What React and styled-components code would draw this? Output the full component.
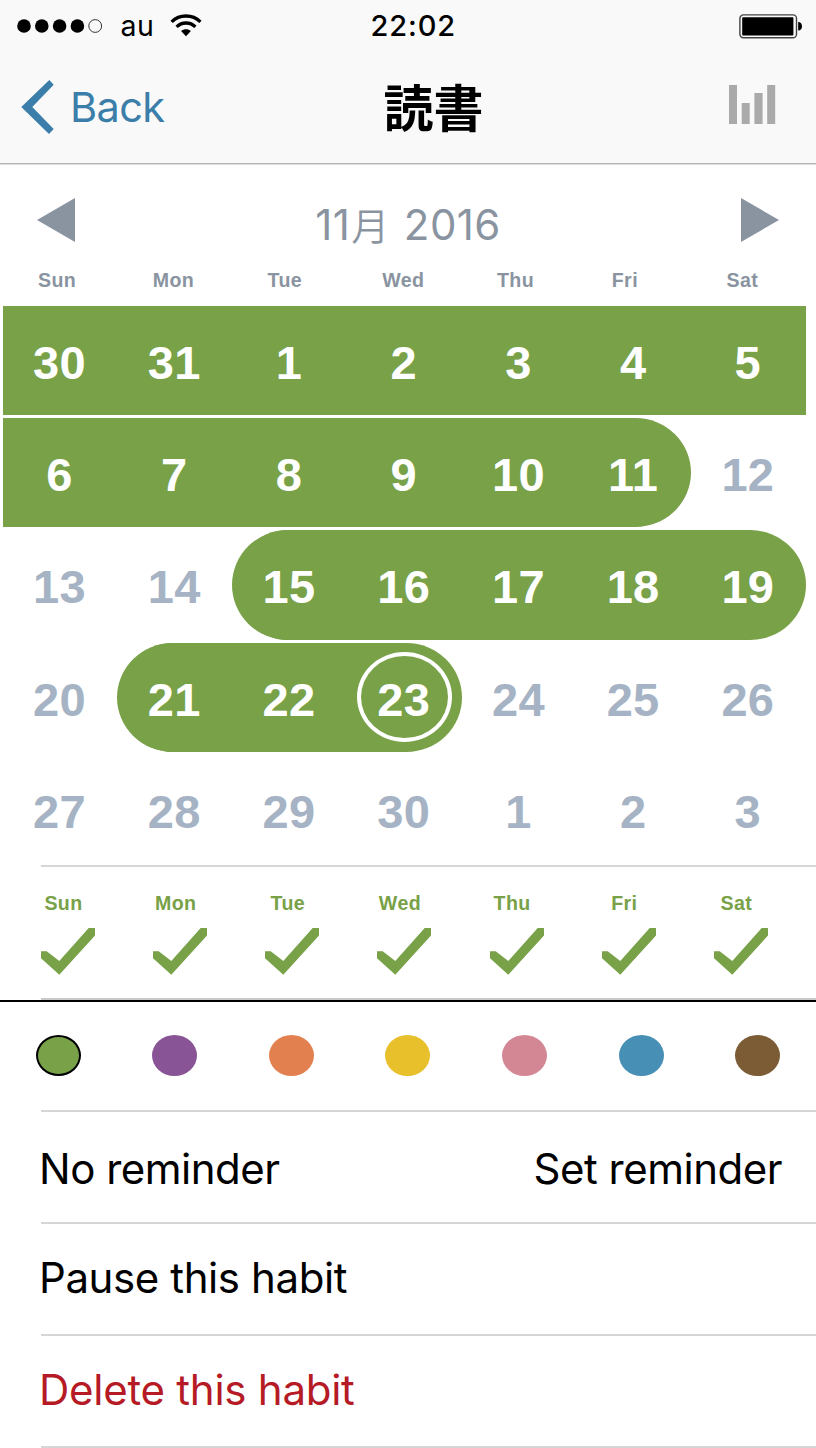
import React from 'react';
import styled, { createGlobalStyle } from 'styled-components';

const GREEN = '#78a148';
const SLATE = '#8a94a1';

const DAYS = ['Sun', 'Mon', 'Tue', 'Wed', 'Thu', 'Fri', 'Sat'];

// done: first and last column of the streak in that week
// start / end: whether the streak is rounded off on that side
const WEEKS = [
    { days: [30, 31, 1, 2, 3, 4, 5], done: [0, 6] },
    { days: [6, 7, 8, 9, 10, 11, 12], done: [0, 5], end: true },
    { days: [13, 14, 15, 16, 17, 18, 19], done: [2, 6], start: true, end: true },
    { days: [20, 21, 22, 23, 24, 25, 26], done: [1, 3], start: true, end: true, today: 3 },
    { days: [27, 28, 29, 30, 1, 2, 3] },
];

const COLORS = ['#78a148', '#885496', '#e2814f', '#e7c02c', '#d38795', '#478fb5', '#7b5c34'];

export default () => {
    return (
        <Screen>
            <GlobalStyle />
            <Header>
                <StatusBar />
                <NavBar>
                    <Back>
                        <BackIcon />
                        <BackText>Back</BackText>
                    </Back>
                    <Title>読書</Title>
                    <ChartIcon />
                </NavBar>
            </Header>
            <MonthBar>
                <Arrow viewBox="0 0 38 44">
                    <path d="M0 22L38 0V44Z" />
                </Arrow>
                <Month>
                    11<Kanji>月</Kanji> 2016
                </Month>
                <Arrow viewBox="0 0 38 44">
                    <path d="M38 22L0 0V44Z" />
                </Arrow>
            </MonthBar>
            <WeekHeader>
                {DAYS.map((day) => (
                    <WeekName key={day}>{day}</WeekName>
                ))}
            </WeekHeader>
            <Calendar>
                {WEEKS.map((week, i) => (
                    <Week key={i} {...week} />
                ))}
            </Calendar>
            <Schedule>
                {DAYS.map((day) => (
                    <ScheduleDay key={day}>
                        <ScheduleName>{day}</ScheduleName>
                        <CheckIcon />
                    </ScheduleDay>
                ))}
            </Schedule>
            <Palette>
                {COLORS.map((color, i) => (
                    <Swatch key={color} $color={color} $active={i === 0} />
                ))}
            </Palette>
            <MenuRow $top={30}>
                <MenuText $spacing="-0.5px">No reminder</MenuText>
                <MenuText $spacing="-0.5px">Set reminder</MenuText>
            </MenuRow>
            <MenuRow>
                <MenuText $spacing="-0.4px">Pause this habit</MenuText>
            </MenuRow>
            <MenuRow>
                <MenuText $danger $spacing="-0.25px">
                    Delete this habit
                </MenuText>
            </MenuRow>
        </Screen>
    );
};

const StatusBar = () => (
    <Status>
        <Carrier>
            <Signal viewBox="0 0 86 14">
                <circle cx="7" cy="7" r="6.8" />
                <circle cx="24.8" cy="7" r="6.8" />
                <circle cx="42.6" cy="7" r="6.8" />
                <circle cx="60.4" cy="7" r="6.8" />
                <circle cx="78.2" cy="7" r="6.4" fill="none" stroke="#333" />
            </Signal>
            <CarrierName>au</CarrierName>
            <Wifi viewBox="0 0 32 23">
                <path d="M1.6 7.9C9.5 0 22.5 0 30.4 7.9" strokeWidth="3.3" />
                <path d="M6.6 12.9C11.9 7.7 20.1 7.7 25.4 12.9" strokeWidth="3.3" />
                <path
                    d="M11.1 17.1C13.9 14.7 18.1 14.7 20.9 17.1L16 22.2Z"
                    fill="#000"
                    stroke="none"
                />
            </Wifi>
        </Carrier>
        <Clock>22:02</Clock>
        <Battery viewBox="0 0 64 26">
            <rect
                x="0.9"
                y="0.9"
                width="56.6"
                height="22.8"
                rx="3.5"
                fill="none"
                stroke="#444"
                strokeWidth="1.4"
            />
            <rect x="3.2" y="3.2" width="51.2" height="18.4" rx="0.8" />
            <path d="M59.2 8C61.8 8 63 10 63 12.3S61.8 16.6 59.2 16.6Z" />
        </Battery>
    </Status>
);

const BackIcon = () => (
    <Chevron viewBox="0 0 33 54">
        <path d="M28.3 0L32.7 4.7L11.3 27L32.7 49L28 54L0.3 27Z" />
    </Chevron>
);

const ChartIcon = () => (
    <Chart viewBox="0 0 47 39">
        <path d="M0 0H8V39H0ZM12.7 18H20.7V39H12.7ZM25.4 8H33.6V39H25.4ZM38.2 0H46.2V39H38.2Z" />
    </Chart>
);

const CheckIcon = () => (
    <Check viewBox="0 0 54 47">
        <path d="M0 23.3H5.7L18.3 33L47.7 0H54V7.5L18.3 46.7L0 30.3Z" />
    </Check>
);

const Week = ({ days, done, start, end, today }) => (
    <WeekRow>
        {days.map((day, i) => {
            const active = !!done && i >= done[0] && i <= done[1];
            return (
                <Day
                    key={i}
                    $active={active}
                    $joined={active && i < done[1]}
                    $start={start && i === done[0]}
                    $end={end && i === done[1]}
                >
                    {day}
                    {today === i && <TodayRing />}
                </Day>
            );
        })}
    </WeekRow>
);

const GlobalStyle = createGlobalStyle`
    body {
        margin: 0;
        background: #fff;
    }

    * {
        box-sizing: border-box;
    }
`;

const Screen = styled.div`
    width: 816px;
    height: 1448px;
    overflow: hidden;
    display: flex;
    flex-direction: column;
    background: #fff;
    color: #000;
    font-family: Inter, 'Noto Sans CJK JP', sans-serif;
`;

const Header = styled.header`
    flex: none;
    height: 164px;
    margin-bottom: 1px;
    background: #f9f9f9;
    border-bottom: 1px solid #b6b6b6;
    box-shadow: 0 1px #dedede;
`;

const Status = styled.div`
    display: grid;
    grid-template-columns: 1fr auto 1fr;
    align-items: center;
    height: 52px;
    padding: 0 13px 0 16.5px;
`;

const Carrier = styled.div`
    display: flex;
    align-items: center;
`;

const Signal = styled.svg`
    width: 86px;
    height: 14px;
`;

const CarrierName = styled.span`
    margin-left: 18px;
    font-size: 28.5px;
    line-height: 52px;
    letter-spacing: 0.5px;
`;

const Wifi = styled.svg`
    width: 32px;
    height: 23px;
    margin: 0 0 2px 16px;
    fill: none;
    stroke: #000;
`;

const Clock = styled.span`
    margin-left: 7px;
    font-size: 29px;
    font-weight: 500;
    line-height: 52px;
    letter-spacing: 0.9px;
`;

const Battery = styled.svg`
    justify-self: end;
    width: 64px;
    height: 26px;
    margin-top: 1px;
`;

const NavBar = styled.div`
    display: grid;
    grid-template-columns: 1fr auto 1fr;
    align-items: center;
    height: 110px;
    padding: 0 40px 0 21px;
`;

const Back = styled.div`
    display: flex;
    align-items: center;
    color: #3a7ea9;
`;

const Chevron = styled.svg`
    width: 33px;
    height: 54px;
    fill: currentColor;
`;

const BackText = styled.span`
    margin-left: 16px;
    font-size: 41.5px;
    line-height: 50px;
    letter-spacing: -0.6px;
`;

const Title = styled.h1`
    margin: 0 0 5px 70px;
    font-family: 'Noto Sans CJK JP', sans-serif;
    font-size: 50px;
    font-weight: 700;
    line-height: 60px;
`;

const Chart = styled.svg`
    width: 47px;
    height: 39px;
    justify-self: end;
    margin-bottom: 6px;
    fill: #aaa;
`;

const MonthBar = styled.div`
    flex: none;
    display: flex;
    align-items: center;
    justify-content: space-between;
    height: 110px;
    padding: 0 37px;
    color: ${SLATE};
`;

const Arrow = styled.svg`
    width: 38px;
    height: 44px;
    fill: currentColor;
`;

const Month = styled.div`
    padding-top: 9px;
    font-size: 42px;
    line-height: 50px;
    letter-spacing: 0.4px;
`;

const Kanji = styled.span`
    margin: 0 2px 0 1px;
    font-family: 'Noto Sans CJK JP', sans-serif;
    font-size: 38px;
    font-weight: 350;
    line-height: 1;
`;

const WeekHeader = styled.div`
    flex: none;
    display: grid;
    grid-template-columns: repeat(7, 114.75px);
    height: 31px;
    padding-left: 38px;
    color: ${SLATE};
`;

const WeekName = styled.span`
    font: bold 19.6px / 10px 'Liberation Sans', Arial, sans-serif;
    letter-spacing: 0.4px;
`;

const Calendar = styled.div`
    flex: none;
    display: grid;
    grid-auto-rows: 109.2px;
    row-gap: 3px;
    width: 803px;
    height: 559px;
    margin-left: 2.7px;
`;

const WeekRow = styled.div`
    display: grid;
    grid-template-columns: repeat(7, 1fr);
`;

const Day = styled.div`
    position: relative;
    display: flex;
    align-items: center;
    justify-content: center;
    padding: 5px 1px 0 0;
    font: bold 47px / 50px 'Liberation Sans', Arial, sans-serif;
    letter-spacing: 0.3px;
    color: ${({ $active }) => ($active ? '#fff' : '#a5b3c4')};
    background: ${({ $active }) => ($active ? GREEN : 'transparent')};
    ${({ $joined }) => ($joined && `box-shadow: 1px 0 ${GREEN};`) || ''}
    ${({ $start }) =>
        ($start && `border-top-left-radius: 56px 55px; border-bottom-left-radius: 56px 55px;`) || ''}
    ${({ $end }) =>
        ($end && `border-top-right-radius: 56px 55px; border-bottom-right-radius: 56px 55px;`) || ''}
`;

const TodayRing = styled.span`
    position: absolute;
    top: 9.5px;
    left: 10px;
    width: 95px;
    height: 90px;
    border: 4px solid #fff;
    border-radius: 50%;
`;

const Row = styled.div`
    flex: none;
    margin-left: 41px;
    border-top: 2px solid #d6d6d9;
`;

const Schedule = styled(Row)`
    display: grid;
    grid-template-columns: repeat(7, 112.17px);
    height: 135px;
    padding-top: 26px;
    border-bottom: 2px solid #c9c9cc;
    color: ${GREEN};
`;

const ScheduleDay = styled.div`
    display: flex;
    flex-direction: column;
    align-items: center;
    width: 54px;
`;

const ScheduleName = styled.span`
    margin-right: 9px;
    font: bold 19.6px / 20px 'Liberation Sans', Arial, sans-serif;
    letter-spacing: 0.4px;
`;

const Check = styled.svg`
    width: 54px;
    height: 47px;
    margin-top: 15px;
    fill: currentColor;
`;

const Palette = styled.div`
    flex: none;
    display: flex;
    align-items: center;
    justify-content: space-between;
    height: 110px;
    padding: 0 35.5px 2px;
    border-top: 2px solid #000;
`;

const Swatch = styled.div`
    width: 45px;
    height: 41px;
    border-radius: 50%;
    background: ${({ $color }) => $color};
    ${({ $active }) => ($active && `border: 2px solid #000;`) || ''}
`;

const MenuRow = styled(Row)`
    display: flex;
    justify-content: space-between;
    height: 112px;
    padding: ${({ $top }) => $top || 27}px 34px 0 0;

    &:last-child {
        height: 114px;
        border-bottom: 2px solid #d6d6d9;
    }
`;

const MenuText = styled.span`
    margin-left: -2px;
    font-size: 42px;
    line-height: 54px;
    letter-spacing: ${({ $spacing }) => $spacing};
    color: ${({ $danger }) => ($danger ? '#b51a25' : '#000')};
`;
